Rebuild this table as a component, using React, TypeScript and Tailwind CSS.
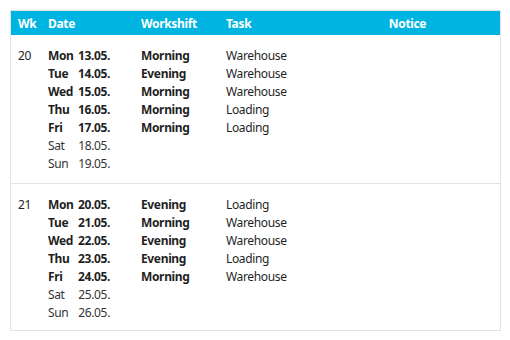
const WEEKS = [
  {
    wk: '20',
    days: [
      { day: 'Mon', date: '13.05.', shift: 'Morning', task: 'Warehouse' },
      { day: 'Tue', date: '14.05.', shift: 'Evening', task: 'Warehouse' },
      { day: 'Wed', date: '15.05.', shift: 'Morning', task: 'Warehouse' },
      { day: 'Thu', date: '16.05.', shift: 'Morning', task: 'Loading' },
      { day: 'Fri', date: '17.05.', shift: 'Morning', task: 'Loading' },
      { day: 'Sat', date: '18.05.' },
      { day: 'Sun', date: '19.05.' },
    ],
  },
  {
    wk: '21',
    days: [
      { day: 'Mon', date: '20.05.', shift: 'Evening', task: 'Loading' },
      { day: 'Tue', date: '21.05.', shift: 'Morning', task: 'Warehouse' },
      { day: 'Wed', date: '22.05.', shift: 'Evening', task: 'Warehouse' },
      { day: 'Thu', date: '23.05.', shift: 'Evening', task: 'Loading' },
      { day: 'Fri', date: '24.05.', shift: 'Morning', task: 'Warehouse' },
      { day: 'Sat', date: '25.05.' },
      { day: 'Sun', date: '26.05.' },
    ],
  },
]

const COLS = 'grid grid-cols-[30px_93px_85px_96px_1fr]'

export default function App() {
  return (
    <div className="w-[510px] h-[340px] bg-white p-[10px] font-['Noto_Sans',sans-serif] text-[12px] tracking-[-0.35px] text-[#1f1f1f]">
      <div className="w-[491px] border border-[#e3e3e3]">
        {/* header */}
        <div className={`${COLS} h-[24px] pt-[2px] items-center bg-[#00b4e1] text-white font-bold`}>
          <div className="pl-[7px]">Wk</div>
          <div className="pl-[7px]">Date</div>
          <div className="pl-[7px]">Workshift</div>
          <div className="pl-[7px]">Task</div>
          <div className="text-center">Notice</div>
        </div>

        {WEEKS.map((w, i) => (
          <div
            key={w.wk}
            className={`${COLS} pt-[12px] ${i === 0 ? 'pb-[10px] border-b border-[#e3e3e3]' : 'pb-[8px]'}`}
          >
            <div className="pl-[7px] leading-[18px]">{w.wk}</div>
            <div className="pl-[7px]">
              {w.days.map((d) => (
                <div
                  key={d.date}
                  className={`flex w-[62px] justify-between leading-[18px] ${d.shift ? 'font-bold' : 'text-[#333]'}`}
                >
                  <span>{d.day}</span>
                  <span>{d.date}</span>
                </div>
              ))}
            </div>
            <div className="pl-[7px] font-bold">
              {w.days.map((d) => (
                <div key={d.date} className="h-[18px] leading-[18px]">{d.shift}</div>
              ))}
            </div>
            <div className="pl-[7px]">
              {w.days.map((d) => (
                <div key={d.date} className="h-[18px] leading-[18px]">{d.task}</div>
              ))}
            </div>
            <div />
          </div>
        ))}
      </div>
    </div>
  )
}
